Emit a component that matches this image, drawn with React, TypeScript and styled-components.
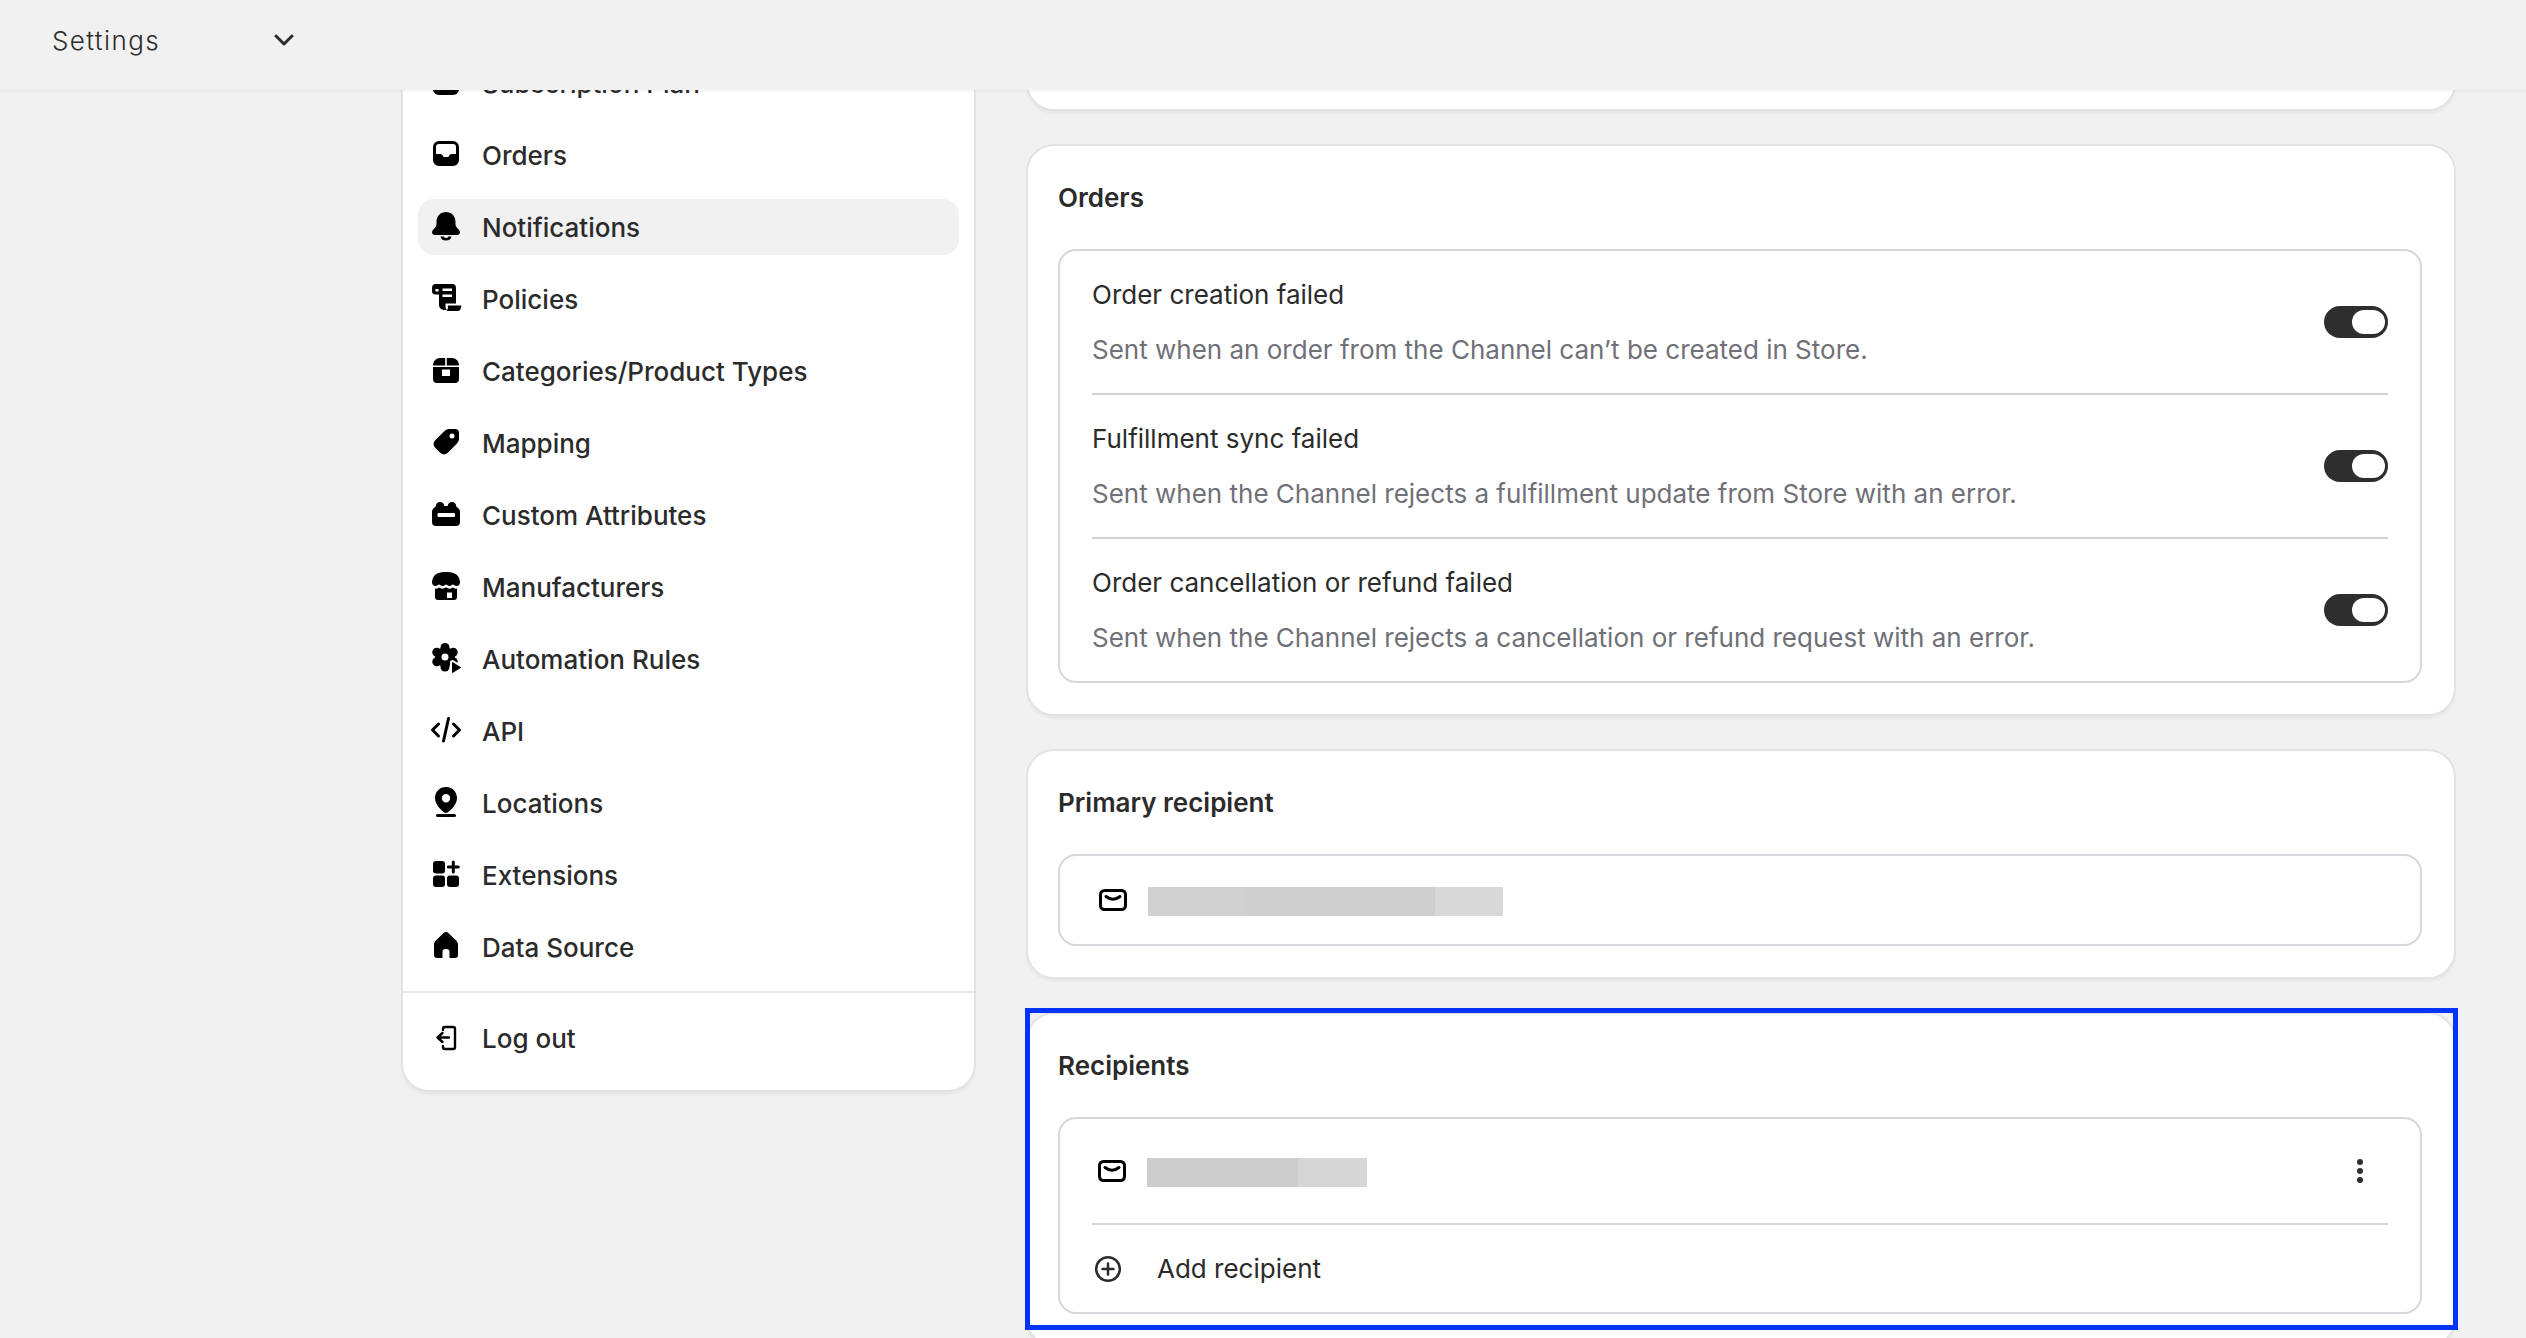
import React from 'react';
import styled, { createGlobalStyle } from 'styled-components';

const GlobalStyle = createGlobalStyle`
  html, body {
    margin: 0;
    padding: 0;
    background: #f1f1f1;
  }
  * {
    box-sizing: border-box;
  }
  body {
    font-family: Inter, "Noto Sans", sans-serif;
    color: #2b2b2b;
    -webkit-font-smoothing: antialiased;
  }
`;

const IconBox = ({ children }: { children: React.ReactNode }) => (
  <NavIconSvg viewBox="0 0 36 36" fill="#000">
    {children}
  </NavIconSvg>
);

const SubscriptionIcon = () => (
  <IconBox>
    <rect x="5" y="5" width="26" height="25" rx="6" />
  </IconBox>
);

const OrdersIcon = () => (
  <IconBox>
    <path
      fillRule="evenodd"
      d="M11 4h14a6 6 0 0 1 6 6v13a6 6 0 0 1-6 6H11a6 6 0 0 1-6-6V10a6 6 0 0 1 6-6zm0 3a3 3 0 0 0-3 3v7h4c1.400 0 2.200.6 2.800 1.600l.7 1.400h5l.7-1.400c.6-1 1.400-1.600 2.800-1.600h4v-7a3 3 0 0 0-3-3H11z"
    />
  </IconBox>
);

const BellIcon = () => (
  <IconBox>
    <path d="M18 3c-5.500 0-9.500 4-9.500 10v2c0 2.500-1.500 3.800-3 5.300C3 22.800 4 26 7 26h22c3 0 4-3.200 1.500-5.700-1.500-1.500-3-2.800-3-5.300v-2C27.500 7 23.500 3 18 3z" />
    <path d="M12.500 27.500h3.200a2.400 2.200 0 0 0 4.600 0h3.200a5.600 5 0 0 1-11 0z" />
  </IconBox>
);

const PoliciesIcon = () => (
  <IconBox>
    <path
      fillRule="evenodd"
      d="M8 3h16a4 4 0 0 1 4 4v15.500H17.500V26c0 1 .5 2 1.500 2.500-.5.300-1 .5-2 .5h-1a5 5 0 0 1-5-5V13.500H7.500A3.500 3.500 0 0 1 4 10V7a4 4 0 0 1 4-4zm-.5 5v2.500h3V8zm7-.5V10H24V7.500zm0 6V16H24v-2.500z"
    />
    <path d="M20 24.500h13.500l-.8 3c-.3 1.500-1.200 2.500-3 2.500H18.500c1-1 1.500-2.500 1.500-5.500z" />
  </IconBox>
);

const CategoriesIcon = () => (
  <IconBox>
    <path
      fillRule="evenodd"
      d="M12 5h5.200v7.500H5V12a7 7 0 0 1 7-7zm6.800 0H24a7 7 0 0 1 7 7v.5H18.800zM5 14h26v12a4 4 0 0 1-4 4H9a4 4 0 0 1-4-4zm9 2.500V23h8v-6.500z"
    />
  </IconBox>
);

const TagIcon = () => (
  <IconBox>
    <path
      fillRule="evenodd"
      d="M21 4h6a4 4 0 0 1 4 4v6a6 6 0 0 1-1.800 4.200L19.500 28a5 5 0 0 1-7 0L7 22.500a5 5 0 0 1 0-7l9.800-9.700A6 6 0 0 1 21 4zm3 4.500a2.500 2.500 0 1 0 0 5 2.500 2.500 0 0 0 0-5z"
    />
  </IconBox>
);

const AttributesIcon = () => (
  <IconBox>
    <path d="M12 5c2.500 0 4 1.600 4.300 4h3.400c.3-2.400 1.800-4 4.300-4s4 1.600 4.300 4.500C30 10.500 32 12.500 32 15v10a4 4 0 0 1-4 4H8a4 4 0 0 1-4-4V15c0-2.500 2-4.500 3.700-5.500C8 6.600 9.500 5 12 5z" />
    <rect x="9.500" y="16" width="17.500" height="4" rx="1" fill="#fff" />
  </IconBox>
);

const StoreIcon = () => (
  <IconBox>
    <path d="M18 3c6 0 9.500 1.200 11.500 3.500C31 8.500 32 11 32 13.500c0 2.500-2 3.500-3.500 3.500-2 0-2.500-1.500-3.500-1.500S23.500 17 21.500 17 19 15.500 18 15.500 16.500 17 14.500 17 12 15.500 11 15.500 9.500 17 7.500 17C6 17 4 16 4 13.500 4 11 5 8.500 6.500 6.500 8.500 4.200 12 3 18 3z" />
    <path
      fillRule="evenodd"
      d="M7 19.500c2 .5 3.500-.3 4-1.200 1.500 1.800 5 1.800 7 0 2 1.800 5.500 1.800 7 0 .5.900 2 1.700 4 1.200V28a3 3 0 0 1-3 3H10a3 3 0 0 1-3-3zm12 4v5.500h5v-5.500z"
    />
  </IconBox>
);

const AutomationIcon = () => (
  <IconBox>
    <circle cx="17" cy="6.500" r="4.500" />
    <circle cx="25.200" cy="11.200" r="4.500" />
    <circle cx="25.200" cy="20.800" r="4.500" />
    <circle cx="17" cy="26" r="4.500" />
    <circle cx="8.800" cy="20.800" r="4.500" />
    <circle cx="8.800" cy="11.200" r="4.500" />
    <circle cx="17" cy="16" r="10" />
    <circle cx="17" cy="16" r="3.500" fill="#fff" />
    <path d="M24.500 21.500l8 5-8 5z" fill="#fff" stroke="#fff" strokeWidth="5" strokeLinejoin="round" />
    <path d="M24.500 21.500l8 5-8 5z" stroke="#000" strokeWidth="1" strokeLinejoin="round" />
  </IconBox>
);

const ApiIcon = () => (
  <IconBox>
    <path
      d="M10.500 11L4.500 17l6 6M25.500 11l6 6-6 6M20.500 5.500L15.500 28"
      fill="none"
      stroke="#000"
      strokeWidth="3"
      strokeLinecap="round"
      strokeLinejoin="round"
    />
  </IconBox>
);

const LocationIcon = () => (
  <IconBox>
    <path
      fillRule="evenodd"
      d="M18 2c6.200 0 11 4.800 11 11 0 6-5 11-9 14.200-1.200 1-2.800 1-4 0C12 24 7 19 7 13 7 6.800 11.800 2 18 2zm0 7a4.200 4.200 0 1 0 0 8.400A4.200 4.200 0 0 0 18 9z"
    />
    <rect x="8" y="29" width="20" height="3" rx="1.500" />
  </IconBox>
);

const ExtensionsIcon = () => (
  <IconBox>
    <rect x="5" y="4" width="12" height="12.500" rx="3" />
    <rect x="5" y="18.500" width="12" height="11.500" rx="3" />
    <rect x="19" y="18.500" width="12" height="11.500" rx="3" />
    <path d="M25.300 5v10M20.300 10h10" stroke="#000" strokeWidth="3" strokeLinecap="round" />
  </IconBox>
);

const HomeIcon = () => (
  <IconBox>
    <path d="M15.600 4c1.400-1.300 3.400-1.300 4.800 0l7.500 7.200c1.400 1.300 2.100 2.900 2.100 4.800v10a3 3 0 0 1-3 3h-5.500v-6a3 3 0 0 0-3-3h-1a3 3 0 0 0-3 3v6H9a3 3 0 0 1-3-3V16c0-1.900.7-3.500 2.100-4.800z" />
  </IconBox>
);

const LogoutIcon = () => (
  <IconBox>
    <path
      d="M15 10V9a2 2 0 0 1 2-2h8a2 2 0 0 1 2 2v18a2 2 0 0 1-2 2h-8a2 2 0 0 1-2-2v-1M21 17.500H10M14.500 13l-5 4.500 5 4.500"
      fill="none"
      stroke="#000"
      strokeWidth="2.400"
      strokeLinecap="round"
      strokeLinejoin="round"
    />
  </IconBox>
);

const MailIcon = () => (
  <MailSvg viewBox="0 0 36 36" fill="none" stroke="#000" strokeWidth="3">
    <rect x="5.500" y="8.500" width="25" height="19" rx="4" />
    <path d="M11 14.500c4.500 3.500 9.500 3.500 14 0" strokeLinecap="round" />
  </MailSvg>
);

const navItems = [
  { label: 'Subscription Plan', icon: <SubscriptionIcon /> },
  { label: 'Orders', icon: <OrdersIcon /> },
  { label: 'Notifications', icon: <BellIcon />, active: true },
  { label: 'Policies', icon: <PoliciesIcon /> },
  { label: 'Categories/Product Types', icon: <CategoriesIcon /> },
  { label: 'Mapping', icon: <TagIcon /> },
  { label: 'Custom Attributes', icon: <AttributesIcon /> },
  { label: 'Manufacturers', icon: <StoreIcon /> },
  { label: 'Automation Rules', icon: <AutomationIcon /> },
  { label: 'API', icon: <ApiIcon /> },
  { label: 'Locations', icon: <LocationIcon /> },
  { label: 'Extensions', icon: <ExtensionsIcon /> },
  { label: 'Data Source', icon: <HomeIcon /> },
];

const orderRows = [
  {
    title: 'Order creation failed',
    text: 'Sent when an order from the Channel can’t be created in Store.',
  },
  {
    title: 'Fulfillment sync failed',
    text: 'Sent when the Channel rejects a fulfillment update from Store with an error.',
  },
  {
    title: 'Order cancellation or refund failed',
    text: 'Sent when the Channel rejects a cancellation or refund request with an error.',
  },
];

const App = () => {
  return (
    <Page>
      <GlobalStyle />
      <Header>
        <SettingsSelect>
          <span>Settings</span>
          <svg width="22" height="14" viewBox="0 0 22 14" fill="none">
            <path
              d="M3 3l8 8 8-8"
              stroke="#2b2b2b"
              strokeWidth="3"
              strokeLinecap="round"
              strokeLinejoin="round"
            />
          </svg>
        </SettingsSelect>
      </Header>
      <Body>
        <Sidebar>
          <NavList>
            {navItems.map((item) => (
              <NavRow key={item.label} $active={item.active}>
                {item.icon}
                {item.label}
              </NavRow>
            ))}
          </NavList>
          <SidebarDivider />
          <NavList>
            <NavRow>
              <LogoutIcon />
              Log out
            </NavRow>
          </NavList>
        </Sidebar>
        <Main>
          <ClippedCard />
          <Card>
            <CardTitle>Orders</CardTitle>
            <InnerBox>
              {orderRows.map((row) => (
                <ToggleRow key={row.title}>
                  <div>
                    <RowTitle>{row.title}</RowTitle>
                    <RowText>{row.text}</RowText>
                  </div>
                  <Toggle>
                    <Knob />
                  </Toggle>
                </ToggleRow>
              ))}
            </InnerBox>
          </Card>
          <Card>
            <CardTitle>Primary recipient</CardTitle>
            <InnerBox>
              <PrimaryRow>
                <MailIcon />
                <RedactedEmail>
                  <RedactedPart $width={97} $color="#d1d1d1" />
                  <RedactedPart $width={190} $color="#cfcfcf" />
                  <RedactedPart $width={68} $color="#d8d8d8" />
                </RedactedEmail>
              </PrimaryRow>
            </InnerBox>
          </Card>
          <Card>
            <Highlight />
            <CardTitle>Recipients</CardTitle>
            <InnerBox>
              <RecipientRow>
                <MailIcon />
                <RedactedEmail>
                  <RedactedPart $width={151} $color="#cdcdcd" />
                  <RedactedPart $width={69} $color="#d6d6d6" />
                </RedactedEmail>
                <MoreButton>
                  <Dot />
                  <Dot />
                  <Dot />
                </MoreButton>
              </RecipientRow>
              <AddRow>
                <svg width="32" height="32" viewBox="0 0 32 32" fill="none" stroke="#2b2b2b" strokeWidth="2.500">
                  <circle cx="16" cy="16" r="11.800" />
                  <path d="M16 10.500v11M10.500 16h11" strokeLinecap="round" />
                </svg>
                Add recipient
              </AddRow>
            </InnerBox>
          </Card>
        </Main>
      </Body>
    </Page>
  );
};

const Page = styled.div`
  width: 2526px;
  height: 1338px;
  display: flex;
  flex-direction: column;
  overflow: hidden;
  background: #f1f1f1;
`;
const Header = styled.header`
  flex: none;
  height: 90px;
  display: flex;
  align-items: center;
  padding: 0 0 10px 52px;
  background: #f1f1f1;
  box-shadow: 0 2px 2px rgba(0, 0, 0, 0.03);
  position: relative;
  z-index: 2;
`;
const SettingsSelect = styled.div`
  width: 243px;
  display: flex;
  align-items: center;
  justify-content: space-between;
  font-size: 26px;
  font-weight: 300;
  letter-spacing: 1.4px;
  color: #2b2b2b;
`;
const Body = styled.div`
  flex: 1;
  min-height: 0;
  display: flex;
  align-items: flex-start;
  gap: 50px;
  padding-left: 401px;
  overflow: hidden;
`;
const Sidebar = styled.nav`
  flex: none;
  width: 575px;
  margin-top: -61px;
  padding: 26px 0 24px;
  background: #fff;
  border: 2px solid #e3e3e3;
  border-top: 0;
  border-radius: 28px;
  box-shadow: 0 3px 2px rgba(0, 0, 0, 0.04);
`;
const NavList = styled.div`
  display: flex;
  flex-direction: column;
  gap: 16px;
  padding: 0 15px;
`;
const NavRow = styled.div<{ $active?: boolean }>`
  height: 56px;
  display: flex;
  align-items: center;
  gap: 18px;
  padding-left: 10px;
  border-radius: 16px;
  background: ${(p) => (p.$active ? '#f1f1f1' : 'transparent')};
  font-size: 26px;
  font-weight: 500;
  color: #2b2b2b;
`;
const NavIconSvg = styled.svg`
  flex: none;
  width: 36px;
  height: 36px;
`;
const SidebarDivider = styled.div`
  height: 2px;
  margin: 16px 0 17px;
  background: #e8e8e8;
`;
const Main = styled.main`
  flex: none;
  width: 1430px;
  margin-top: -79px;
  display: flex;
  flex-direction: column;
  gap: 33px;
`;
const Card = styled.section`
  position: relative;
  padding: 32px 32px 31px 30px;
  background: #fff;
  border: 2px solid #e3e3e3;
  border-radius: 28px;
  box-shadow: 0 3px 2px rgba(0, 0, 0, 0.04);
`;
const ClippedCard = styled(Card)`
  height: 100px;
`;
const CardTitle = styled.h2`
  margin: 0 0 31px;
  font-size: 26px;
  line-height: 40px;
  font-weight: 600;
  color: #2b2b2b;
`;
const InnerBox = styled.div`
  border: 2px solid #d7d8db;
  border-radius: 18px;
  background: #fff;
`;
const ToggleRow = styled.div`
  height: 144px;
  margin: 0 32px;
  display: flex;
  align-items: center;
  justify-content: space-between;
  border-bottom: 2px solid #d2d3d8;
  &:last-child {
    height: 142px;
    border-bottom: 0;
  }
`;
const RowTitle = styled.div`
  font-size: 26px;
  line-height: 36px;
  color: #2b2b2b;
`;
const RowText = styled.div`
  margin-top: 19px;
  font-size: 26px;
  line-height: 36px;
  color: #6f7078;
`;
const Toggle = styled.div`
  width: 64px;
  height: 32px;
  padding: 4px 3px;
  display: flex;
  justify-content: flex-end;
  border-radius: 16px;
  background: #2e2e2e;
`;
const Knob = styled.div`
  width: 33px;
  height: 24px;
  border-radius: 12px;
  background: #fff;
`;
const PrimaryRow = styled.div`
  height: 88px;
  display: flex;
  align-items: center;
  gap: 17px;
  padding-left: 35px;
`;
const RecipientRow = styled.div`
  height: 106px;
  margin: 0 32px;
  display: flex;
  align-items: center;
  gap: 17px;
  padding-left: 2px;
  border-bottom: 2px solid #d2d3d8;
`;
const MailSvg = styled.svg`
  flex: none;
  width: 36px;
  height: 36px;
`;
const RedactedEmail = styled.div`
  display: flex;
  height: 29px;
  margin-top: 3px;
`;
const RedactedPart = styled.div<{ $width: number; $color: string }>`
  width: ${(p) => p.$width}px;
  background: ${(p) => p.$color};
`;
const MoreButton = styled.div`
  margin-left: auto;
  margin-right: 25px;
  display: flex;
  flex-direction: column;
  gap: 3px;
`;
const Dot = styled.span`
  width: 6px;
  height: 6px;
  border-radius: 50%;
  background: #2e2e2e;
`;
const AddRow = styled.div`
  height: 87px;
  margin: 0 32px;
  display: flex;
  align-items: center;
  gap: 33px;
  font-size: 26px;
  color: #2b2b2b;
`;
const Highlight = styled.div`
  position: absolute;
  top: -6px;
  left: -3px;
  width: 1433px;
  height: 322px;
  border: 5px solid #0033ff;
  pointer-events: none;
`;

export default App;
